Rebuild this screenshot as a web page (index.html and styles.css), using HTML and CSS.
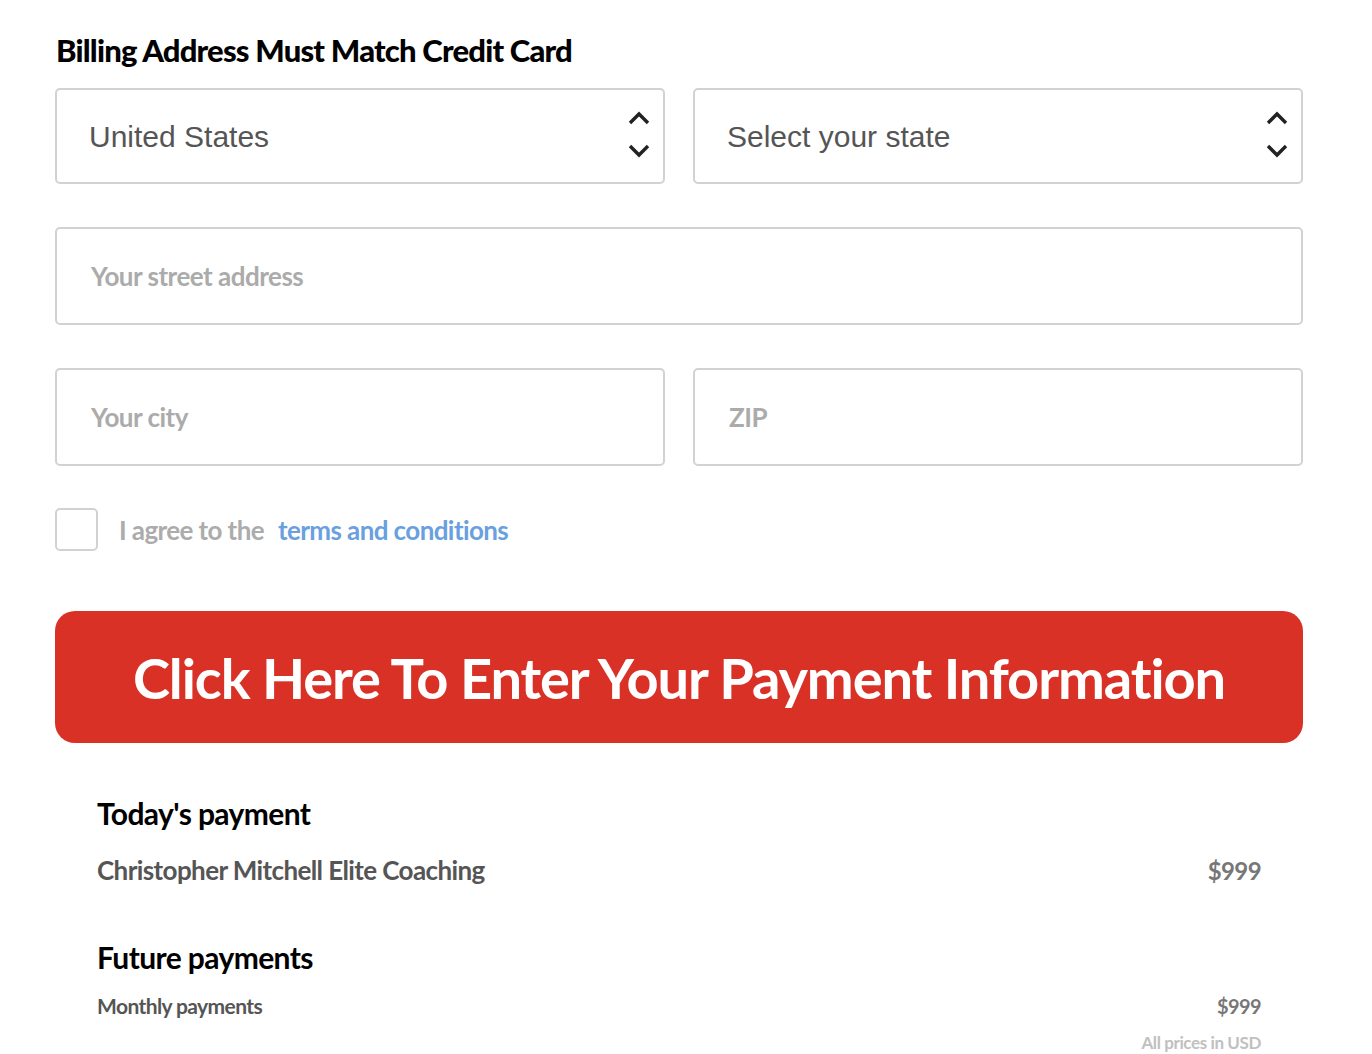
FILE: index.html
```html
<!DOCTYPE html>
<html lang="en">
<head>
    <meta charset="UTF-8">
    <meta name="viewport" content="width=device-width, initial-scale=1.0">
    <title>Billing Address</title>
    <link rel="stylesheet" href="styles.css">
</head>
<body>

<div class="container">
    <h2 class="title">Billing Address Must Match Credit Card</h2>

    <div class="row">
        <div class="select-wrap">
            <select class="field select">
                <option>United States</option>
            </select>
            <svg class="arrows" width="22" height="50" viewBox="0 0 22 50">
                <path d="M2 13 L11 4 L20 13" />
                <path d="M2 36 L11 45 L20 36" />
            </svg>
        </div>
        <div class="select-wrap">
            <select class="field select">
                <option>Select your state</option>
            </select>
            <svg class="arrows" width="22" height="50" viewBox="0 0 22 50">
                <path d="M2 13 L11 4 L20 13" />
                <path d="M2 36 L11 45 L20 36" />
            </svg>
        </div>
    </div>

    <div class="row">
        <input type="text" class="field" placeholder="Your street address">
    </div>

    <div class="row last">
        <input type="text" class="field" placeholder="Your city">
        <input type="text" class="field" placeholder="ZIP">
    </div>

    <div class="agree">
        <span class="checkbox"></span>
        <span class="agree-text">I agree to the</span>
        <a href="#" class="terms">terms and conditions</a>
    </div>

    <button class="pay-btn">Click Here To Enter Your Payment Information</button>

    <div class="summary">
        <h3>Today's payment</h3>
        <div class="line">
            <span>Christopher Mitchell Elite Coaching</span>
            <span class="price">$999</span>
        </div>

        <h3 class="future">Future payments</h3>
        <div class="line small">
            <span>Monthly payments</span>
            <span class="price">$999</span>
        </div>
        <div class="note">All prices in USD</div>
    </div>
</div>

</body>
</html>
```

FILE: styles.css
```css
body {
    margin: 0;
    padding: 0;
    background-color: #fff;
    font-family: Lato, "Open Sans", sans-serif;
    color: #000;
}
.container {
    width: 1248px;
    margin-left: 55px;
    padding-top: 28px;
}
.title {
    margin: 0 0 16px 1px;
    font-size: 31px;
    font-weight: 900;
    letter-spacing: -0.8px;
    line-height: 44px;
}
.row {
    display: flex;
    gap: 28px;
    margin-bottom: 43px;
}
.row.last {
    margin-bottom: 42px;
}
.field {
    flex: 1;
    height: 98px;
    box-sizing: border-box;
    border: 2px solid #d2d2d2;
    border-radius: 5px;
    background: #fff;
    padding: 0 34px;
    font-family: Lato, sans-serif;
    font-size: 26px;
    font-weight: 700;
    color: #555;
    outline: none;
}
.field::placeholder {
    color: #ababab;
    letter-spacing: -0.5px;
}
.select-wrap {
    flex: 1;
    position: relative;
    display: flex;
}
.select {
    appearance: none;
    -webkit-appearance: none;
    height: 96px;
    padding: 0 32px;
    font-family: "Liberation Sans", Arial, sans-serif;
    font-weight: 400;
    font-size: 30px;
    color: #555;
}
.arrows {
    position: absolute;
    right: 15px;
    top: 22px;
    pointer-events: none;
}
.arrows path {
    fill: none;
    stroke: #222;
    stroke-width: 3.4;
}
.agree {
    display: flex;
    align-items: center;
    margin-bottom: 60px;
    font-size: 26px;
    font-weight: 700;
    letter-spacing: -0.6px;
}
.checkbox {
    width: 43px;
    height: 43px;
    box-sizing: border-box;
    border: 2px solid #d2d2d2;
    border-radius: 5px;
    margin-right: 21px;
}
.agree-text {
    color: #acacac;
    margin-right: 14px;
}
.terms {
    color: #6a9fe0;
    text-decoration: none;
}
.pay-btn {
    display: block;
    width: 100%;
    height: 132px;
    border: none;
    border-radius: 20px;
    background-color: #d93126;
    color: #fff;
    font-family: Lato, sans-serif;
    font-size: 56px;
    font-weight: 700;
    letter-spacing: -1.1px;
    cursor: pointer;
}
.summary {
    padding: 50px 42px 0 42px;
}
.summary h3 {
    margin: 0;
    font-size: 30px;
    font-weight: 700;
    letter-spacing: -0.6px;
    line-height: 40px;
}
.line {
    display: flex;
    justify-content: space-between;
    align-items: center;
    margin-top: 21px;
    font-size: 26px;
    font-weight: 700;
    color: #555;
    letter-spacing: -0.6px;
}
.line .price {
    color: #777;
    font-size: 24px;
}
.summary h3.future {
    margin-top: 51px;
}
.line.small {
    margin-top: 16px;
    font-size: 21px;
}
.line.small .price {
    font-size: 20px;
}
.note {
    text-align: right;
    margin-top: 14px;
    font-size: 17px;
    font-weight: 700;
    color: #c0c0c0;
    letter-spacing: -0.4px;
}
```
